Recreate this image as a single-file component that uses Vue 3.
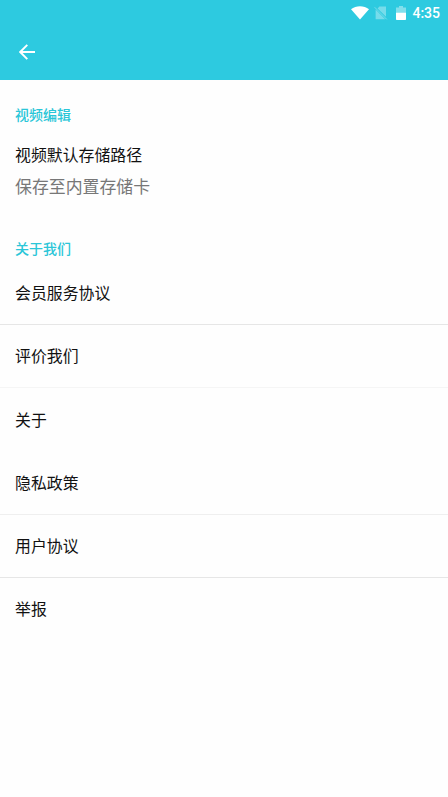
<script setup>
const rows = [
  { label: '会员服务协议', line: 'strong', tall: true },
  { label: '评价我们', line: 'faint', raised: true },
  { label: '关于', line: 'none' },
  { label: '隐私政策', line: 'soft', tall: true },
  { label: '用户协议', line: 'strong', raised: true },
  { label: '举报', line: 'none', raised: true },
]
</script>

<template>
  <div class="screen">
    <header class="header">
      <div class="status">
        <svg class="wifi" width="18" height="14" viewBox="0 0 18 14">
          <path d="M0 3.2C5 -.7 13 -.7 18 3.2L9 13.6Z" fill="#fff" />
        </svg>
        <svg class="sim" width="14" height="14" viewBox="0 0 14 14">
          <path d="M5.4 .6H12V10.8L3.6 2.5Z" fill="#fff" opacity=".35" />
          <path d="M1.6 3.6L11.2 13.2H1.6Z" fill="#fff" opacity=".35" />
          <path d="M.6 1.2L12.8 13.4" stroke="#fff" stroke-width=".9" opacity=".4" />
        </svg>
        <svg class="battery" width="10" height="14" viewBox="0 0 10 14">
          <path d="M3 0H7V1.4H10V7H0V1.4H3Z" fill="#fff" opacity=".4" />
          <path d="M0 6.8H10V13.2Q10 14 9.2 14H.8Q0 14 0 13.2Z" fill="#fff" />
        </svg>
        <span class="time">4:35</span>
      </div>
      <div class="toolbar">
        <svg width="16" height="16" viewBox="0 0 16 16" fill="none" stroke="#fff" stroke-width="1.9">
          <path d="M16 8H1.6M8.3 .8L1.2 8L8.3 15.2" />
        </svg>
      </div>
    </header>
    <main>
      <h2 class="heading">视频编辑</h2>
      <section class="storage">
        <p class="title">视频默认存储路径</p>
        <p class="value">保存至内置存储卡</p>
      </section>
      <h2 class="heading">关于我们</h2>
      <ul class="list">
        <li
          v-for="row in rows"
          :key="row.label"
          class="row"
          :class="[row.line, { tall: row.tall, raised: row.raised }]"
        >
          {{ row.label }}
        </li>
      </ul>
    </main>
  </div>
</template>

<style>
body {
  background: #fefefe;
}
</style>

<style scoped>
.screen {
  height: 797px;
  overflow: hidden;
  background: #fefefe;
  font-family: "Noto Sans CJK SC", sans-serif;
  color: #111;
}
.header {
  height: 80px;
  background: #2dcae0;
}
.status {
  height: 25px;
  display: flex;
  align-items: center;
  justify-content: flex-end;
  padding-right: 8px;
  box-sizing: border-box;
}
.sim {
  margin-left: 5px;
}
.battery {
  margin-left: 8px;
}
.time {
  margin-left: 6px;
  padding-top: 2px;
  font: 500 14px/23px Roboto, sans-serif;
  color: #fff;
}
.toolbar {
  height: 53px;
  padding-left: 19px;
  display: flex;
  align-items: center;
}
.heading {
  margin: 0;
  padding: 24px 15px 0;
  font-size: 14px;
  line-height: 20px;
  font-weight: 500;
  color: #2bc6d8;
}
.storage {
  height: 90px;
  padding: 15px 15px 0;
  box-sizing: border-box;
}
.title,
.value {
  margin: 0;
  font-size: 15.9px;
  line-height: 31px;
}
.value {
  font-size: 16.9px;
  line-height: 32px;
  color: #777;
}
.list {
  margin: 0;
  padding: 3px 0 0;
  list-style: none;
}
.row {
  height: 63px;
  box-sizing: border-box;
  padding-left: 15px;
  border-bottom: 1px solid transparent;
  font-size: 15.9px;
  line-height: 63px;
}
.tall {
  height: 64px;
}
.raised {
  line-height: 61px;
}
.strong {
  border-color: #e6e6e6;
}
.soft {
  border-color: #efefef;
}
.faint {
  border-color: #f5f5f5;
}
</style>
